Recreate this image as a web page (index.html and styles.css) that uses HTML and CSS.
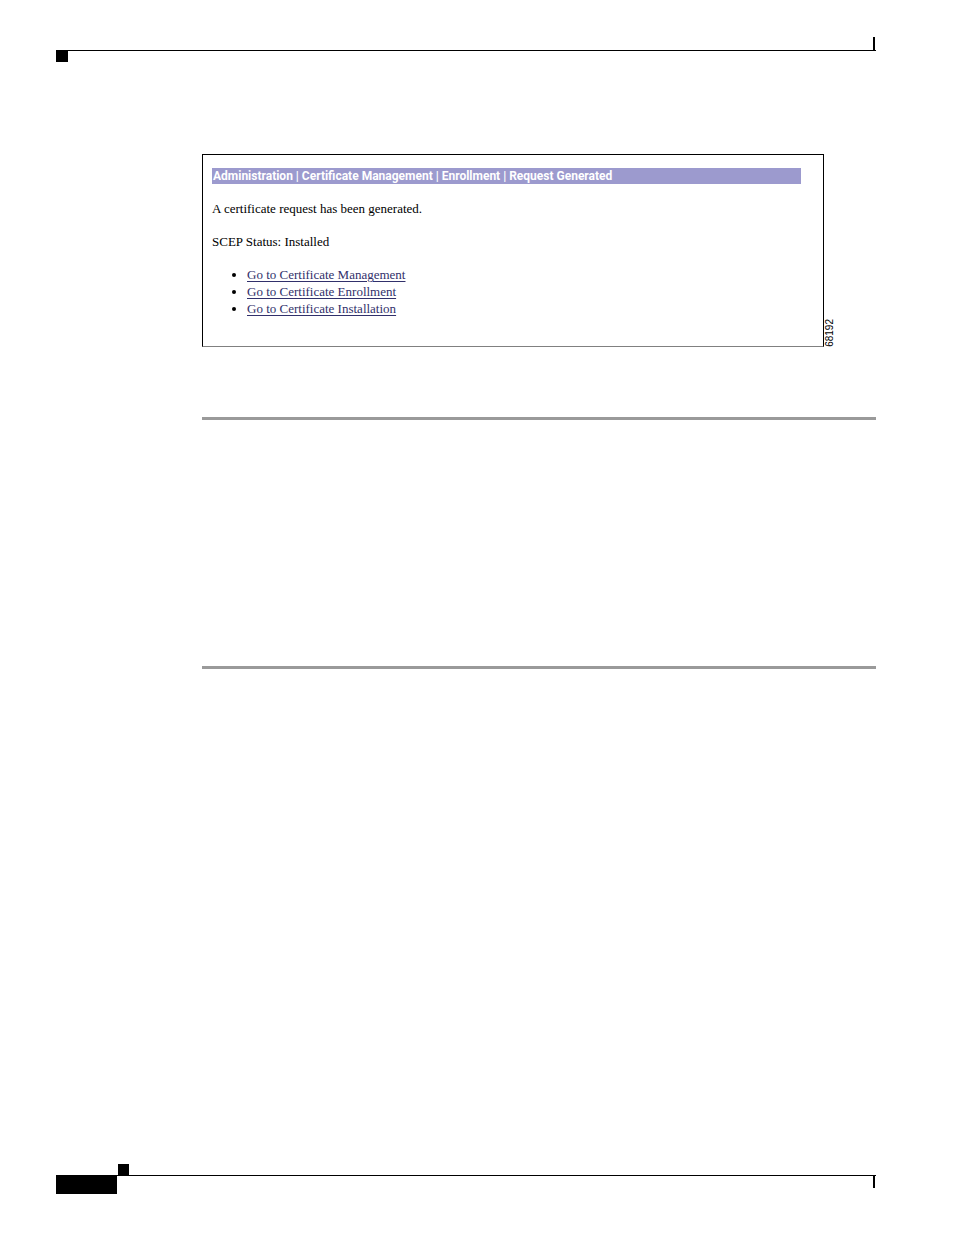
FILE: index.html
```html
<!DOCTYPE html>
<html lang="en">
<head>
<meta charset="utf-8">
<title>Request Generated</title>
<link rel="stylesheet" href="styles.css">
</head>
<body>
<div class="page">
  <header class="page-header">
    <span class="tick"></span>
    <div class="header-rule"><span class="header-square"></span></div>
  </header>
  <main class="content">
    <figure class="figure">
      <section class="screen">
        <h1 class="title-bar">Administration | Certificate Management | Enrollment | Request Generated</h1>
        <p class="message">A certificate request has been generated.</p>
        <p class="message">SCEP Status: Installed</p>
        <ul class="links">
          <li><a href="#management">Go to Certificate Management</a></li>
          <li><a href="#enrollment">Go to Certificate Enrollment</a></li>
          <li><a href="#installation">Go to Certificate Installation</a></li>
        </ul>
      </section>
      <figcaption class="figure-number">68192</figcaption>
    </figure>
    <hr class="divider">
    <hr class="divider divider-end">
  </main>
  <footer class="page-footer">
    <span class="footer-square"></span>
    <div class="footer-rule">
      <span class="page-number"></span>
      <span class="tick"></span>
    </div>
  </footer>
</div>
</body>
</html>
```

FILE: styles.css
```css
* {
  box-sizing: border-box;
}

body {
  margin: 0;
  background: #fff;
  color: #000;
  font-family: "Liberation Serif", "Times New Roman", serif;
  font-size: 13px;
}

.page {
  display: flex;
  flex-direction: column;
  min-height: 100vh;
  padding: 37px 78px 41px 56px;
}

.page-header,
.page-footer {
  display: flex;
  flex-direction: column;
}

.tick {
  width: 2px;
  height: 13px;
  margin-right: 1px;
  background: #000;
}

.page-header .tick {
  align-self: flex-end;
}

.header-rule {
  height: 12px;
  border-top: 1px solid #000;
}

.header-square {
  display: block;
  width: 12px;
  height: 11px;
  background: #000;
}

.content {
  flex: 1;
  padding: 92px 0 0 146px;
}

.figure {
  display: flex;
  margin: 0 40px 70px 0;
}

.screen {
  flex: 1;
  padding: 13px 22px 29px 9px;
  border: 1px solid #000;
  border-bottom-color: #808080;
}

.title-bar {
  margin: 0 0 16px;
  padding-left: 1px;
  background: #9c9ace;
  color: #fff;
  font: bold 12px/16px Roboto, "Liberation Sans", Arial, sans-serif;
}

.message {
  margin: 0 0 16px;
  line-height: 17px;
}

.links {
  margin: 0;
  padding-left: 35px;
  line-height: 17px;
}

.links a {
  color: #31306b;
  text-underline-offset: 2px;
}

.figure-number {
  width: 12px;
  align-self: flex-end;
  font: 10px/12px "Liberation Sans", Arial, sans-serif;
  writing-mode: vertical-rl;
  transform: rotate(180deg);
}

.divider {
  height: 3px;
  margin: 0;
  border: 0;
  background: #9a9a9a;
}

.divider-end {
  margin-top: 246px;
}

.footer-square {
  width: 11px;
  height: 11px;
  margin-left: 62px;
  background: #000;
}

.footer-rule {
  display: flex;
  justify-content: space-between;
  border-top: 1px solid #000;
}

.footer-rule .tick {
  height: 12px;
}

.page-number {
  width: 61px;
  height: 18px;
  background: #000;
}
```
